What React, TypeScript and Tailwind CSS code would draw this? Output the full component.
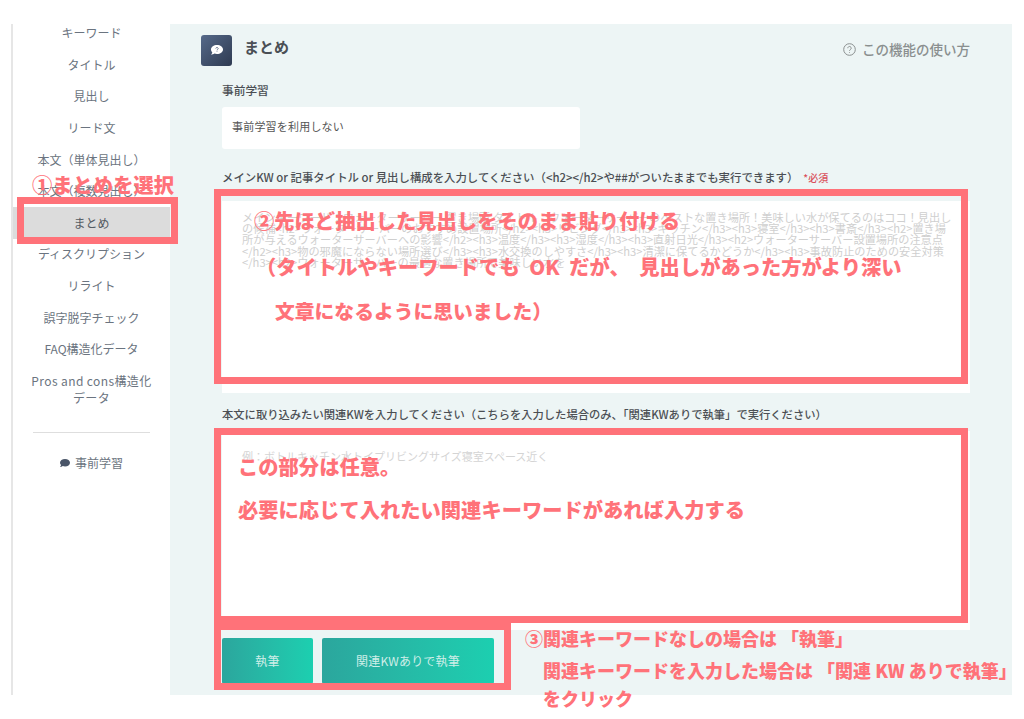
import React from "react";

const items = ["キーワード","タイトル","見出し","リード文","本文（単体見出し）","本文（複数見出し）","まとめ","ディスクリプション","リライト","誤字脱字チェック","FAQ構造化データ"];
const font = { fontFamily: '"Noto Sans CJK JP", "Noto Sans", sans-serif' };
const lines = [
  "メインキーワード：ウォーターサーバー 置き場所 タイトル：ウォーターサーバーのベストな置き場所！美味しい水が保てるのはココ！見出し",
  "の候補<h2>ウォーターサーバーのおすすめ設置場所</h2><h3>リビング</h3><h3>キッチン</h3><h3>寝室</h3><h3>書斎</h3><h2>置き場",
  "所が与えるウォーターサーバーへの影響</h2><h3>温度</h3><h3>湿度</h3><h3>直射日光</h3><h2>ウォーターサーバー設置場所の注意点",
  "</h2><h3>物の邪魔にならない場所選び</h3><h3>水交換のしやすさ</h3><h3>清潔に保てるかどうか</h3><h3>事故防止のための安全対策",
  "</h3><h2>ウォーターサーバーの最適な置き場所で美味しい水を",
];

export default function App() {
  return (
    <div style={font} className="relative w-[1024px] h-[719px] overflow-hidden bg-white pt-6 pb-6 pl-[11px] pr-3">
      <div className="flex h-[671px]">
        <aside className="w-[159px] shrink-0 overflow-hidden border-l-2 border-[#e6e6e6] text-[12px] text-[#6b7480]">
          <ul className="-mt-[6.5px]">
            {items.map((t) => (
              <li key={t} className={"flex h-[31.6px] items-center justify-center whitespace-nowrap " + (t === "まとめ" ? "bg-[#dcdcdc] text-[#555b63]" : "")}>{t}</li>
            ))}
          </ul>
          <div className="px-2 pt-[7px] text-center leading-[17px] tracking-[0.4px]">Pros and cons構造化<br />データ</div>
          <div className="mx-5 mt-[26px] h-px bg-[#dedede]" />
          <div className="mt-[21px] flex items-center justify-center gap-[5px]">
            <svg width="10" height="9" viewBox="0 0 10 9"><path d="M5 0C2.2 0 0 1.6 0 3.7c0 .9.4 1.7 1.1 2.3C.9 6.800.4 7.500 0 8c1 0 2-.4 2.800-1 .7.3 1.400.4 2.200.4 2.800 0 5-1.600 5-3.700S7.800 0 5 0z" fill="#4a5568" /></svg>
            <span>事前学習</span>
          </div>
        </aside>

        <main className="flex-1 bg-[#edf5f5] pl-[31px] pr-[42px] pt-[11px]">
          <header className="flex items-start justify-between">
            <div className="flex items-start gap-3">
              <div className="flex h-[31px] w-[31px] items-center justify-center rounded-[3px] bg-gradient-to-br from-[#566a8a] to-[#2f3b52]">
                <svg width="12" height="11" viewBox="0 0 12 11"><path d="M6 0C2.700 0 0 1.900 0 4.500c0 1.100.5 2.100 1.300 2.800-.2 1-.8 1.900-1.300 2.500 1.300 0 2.500-.5 3.400-1.200.8.300 1.700.4 2.600.4 3.300 0 6-2 6-4.500S9.300 0 6 0z" fill="#fff" /><path d="M4.800 3.500a1.200 1.100 0 1 1 1.800 1c-.4.2-.6.4-.6.8M6 6.200v.6" stroke="#4a5a78" strokeWidth=".8" fill="none" /></svg>
              </div>
              <h1 className="mt-[1px] text-[15px] leading-[22px] font-bold text-[#4a4f55]">まとめ</h1>
            </div>
            <a className="mt-[4px] flex items-center gap-[6px] text-[13.500px] leading-[20px] font-medium text-[#8a8f8f]">
              <svg width="13" height="13" viewBox="0 0 13 13" fill="none" stroke="#8a8f8f"><circle cx="6.500" cy="6.500" r="5.800" /><path d="M4.800 5.200a1.700 1.700 0 1 1 2.600 1.400c-.6.4-.9.700-.9 1.300M6.500 9.200v.7" /></svg>
              この機能の使い方
            </a>
          </header>

          <div className="pl-[21px]">
            <label className="mt-[16px] block text-[11.700px] leading-[16px] font-medium text-[#4b4f54]">事前学習</label>
            <div className="mt-[9px] flex h-[42px] w-[358px] items-center rounded-[3px] bg-white pb-[3px] pl-[10px] text-[11px] tracking-[0.2px] text-[#555]">事前学習を利用しない</div>

            <label className="mt-[20px] block whitespace-nowrap text-[11.400px] leading-[16px] font-medium text-[#4b4f54]">
              メインKW or 記事タイトル or 見出し構成を入力してください（&lt;h2&gt;&lt;/h2&gt;や##がついたままでも実行できます）
              <span className="ml-[5px] text-[10px] text-[#d9505c]">*必須</span>
            </label>
            <div className="mt-[15px] h-[192px] w-[748px] overflow-hidden bg-white pt-[11px] pl-[20px] text-[11.200px] leading-[11.200px] text-[#cfcfcf]">
              {lines.map((l) => <div key={l} className="whitespace-nowrap">{l}</div>)}
            </div>

            <label className="mt-[13px] block whitespace-nowrap text-[11.300px] leading-[16px] font-medium text-[#4b4f54]">本文に取り込みたい関連KWを入力してください（こちらを入力した場合のみ、「関連KWありで執筆」で実行ください）</label>
            <div className="mt-[9px] h-[199px] w-[748px] bg-white pt-[19px] pl-[20px] text-[11px] leading-[12px] text-[#d4d4d4]">例：ボトルキッチン水トイプリビングサイズ寝室スペース近く</div>

            <div className="mt-[8px] flex gap-[9px] text-[12px] tracking-[0.2px] text-[#cfeee8]">
              <button className="h-[46px] w-[91px] rounded-[2px] bg-gradient-to-r from-[#2ba69d] to-[#1ccfb0]">執筆</button>
              <button className="h-[46px] w-[172px] rounded-[2px] bg-gradient-to-r from-[#2ba69d] to-[#1ccfb0]">関連KWありで執筆</button>
            </div>
          </div>
        </main>
      </div>

      {/* annotation overlays */}
      <div className="absolute left-[17px] top-[197px] h-[47px] w-[161px] border-[7px] border-[#ff7279]" />
      <div className="absolute left-[32px] top-[169px] whitespace-pre text-[20.300px] leading-[30px] font-black text-[#ff7279]">①まとめを選択</div>

      <div className="absolute left-[214px] top-[189px] flex h-[195px] w-[754px] flex-col gap-[15.500px] border-[7px] border-[#ff7279] pl-[33px] pt-[9px] text-[20.300px] leading-[30px] font-black whitespace-pre text-[#ff7279]">
        <div>②先ほど抽出した見出しをそのまま貼り付ける</div>
        <div className="ml-[2px] [word-spacing:5px]">（タイトルやキーワードでも OK だが、 見出しがあった方がより深い</div>
        <div className="ml-[21px] text-[19.800px]">文章になるように思いました）</div>
      </div>

      <div className="absolute left-[214px] top-[428px] flex h-[195px] w-[754px] flex-col gap-[13px] border-[7px] border-[#ff7279] pl-[17px] pt-[16px] text-[20.300px] leading-[30px] font-black whitespace-pre text-[#ff7279]">
        <div>この部分は任意。</div>
        <div>必要に応じて入れたい関連キーワードがあれば入力する</div>
      </div>

      <div className="absolute left-[214px] top-[623px] h-[67px] w-[297px] border-[7px] border-[#ff7279]" />

      <div className="absolute left-[525px] top-[625px] flex flex-col text-[18px] leading-[26px] font-black whitespace-pre text-[#ff7279]">
        <div>③関連キーワードなしの場合は 「執筆」</div>
        <div className="mt-[6px] ml-[18px]">関連キーワードを入力した場合は 「関連 KW ありで執筆」</div>
        <div className="mt-[2px] ml-[18px]">をクリック</div>
      </div>
    </div>
  );
}
